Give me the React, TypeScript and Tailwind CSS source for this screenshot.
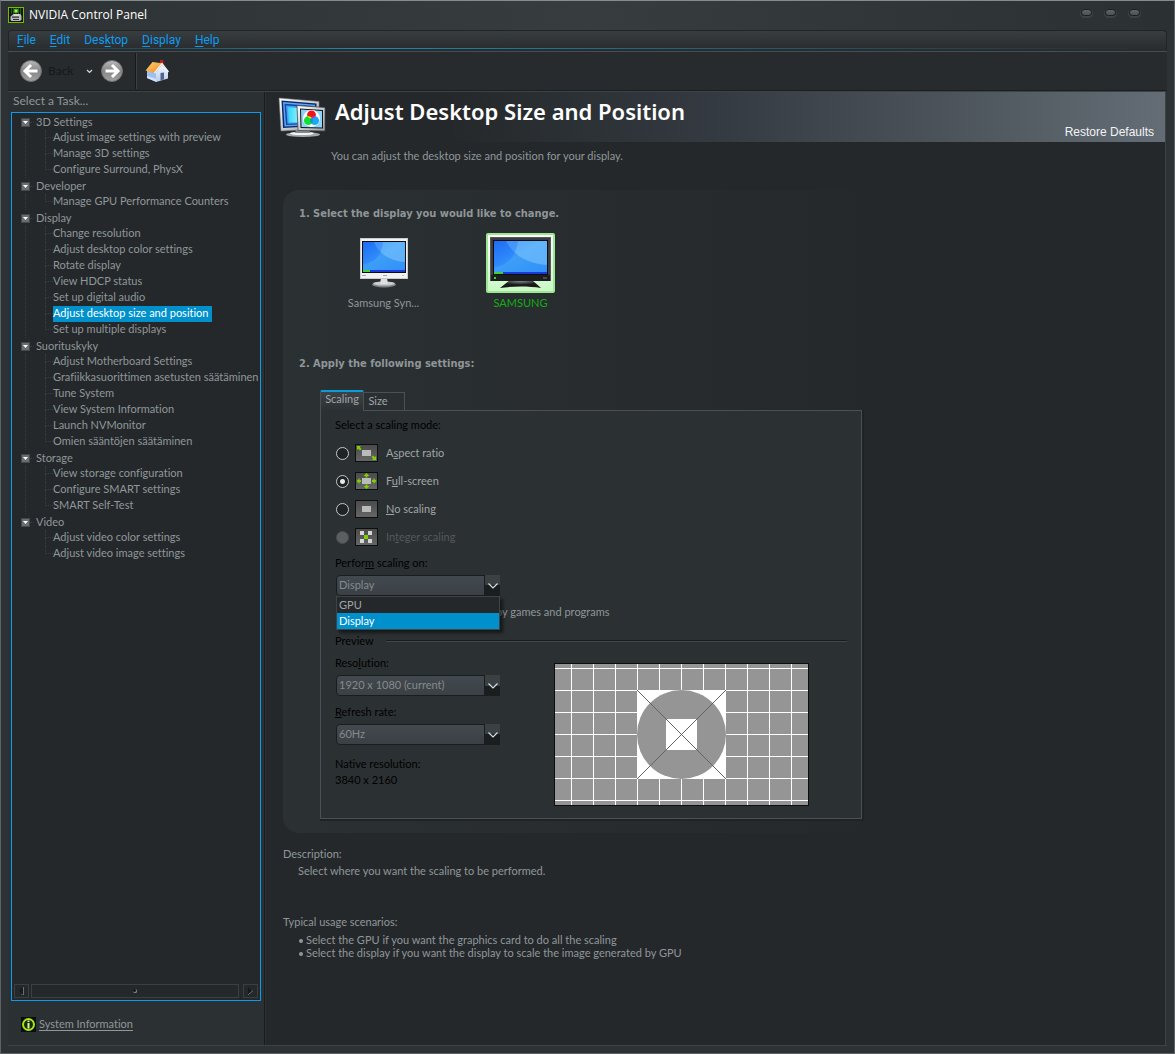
import { useState, type ReactNode } from "react";

type Group = { name: string; items: string[] };

const GROUPS: Group[] = [
  {
    name: "3D Settings",
    items: ["Adjust image settings with preview", "Manage 3D settings", "Configure Surround, PhysX"],
  },
  { name: "Developer", items: ["Manage GPU Performance Counters"] },
  {
    name: "Display",
    items: [
      "Change resolution",
      "Adjust desktop color settings",
      "Rotate display",
      "View HDCP status",
      "Set up digital audio",
      "Adjust desktop size and position",
      "Set up multiple displays",
    ],
  },
  {
    name: "Suorituskyky",
    items: [
      "Adjust Motherboard Settings",
      "Grafiikkasuorittimen asetusten säätäminen",
      "Tune System",
      "View System Information",
      "Launch NVMonitor",
      "Omien sääntöjen säätäminen",
    ],
  },
  {
    name: "Storage",
    items: ["View storage configuration", "Configure SMART settings", "SMART Self-Test"],
  },
  { name: "Video", items: ["Adjust video color settings", "Adjust video image settings"] },
];

function AppIcon() {
  return (
    <svg width="16" height="16" viewBox="0 0 16 16" aria-hidden="true">
      <rect x="0.5" y="0.5" width="15" height="15" fill="#111411" stroke="#76b900" />
      <path d="M3.500 1v6M5.500 1v6M10.500 1v6M12.500 1v6" stroke="#2d5a12" />
      <circle cx="8" cy="4" r="2.400" fill="#3fb010" />
      <circle cx="8" cy="4" r="1.200" fill="#8dff4a" />
      <path d="M2.500 9.500l3-2.500h7l1 2v4l-2 1h-8l-1-1z" fill="#b9bcbb" />
      <path d="M4 9.500h7v1.200H4zM5 12h6v1H5z" fill="#2a2e2d" />
      <path d="M6 8h5" stroke="#f2f4f3" />
    </svg>
  );
}

function ArrowDisc({ forward = false }: { forward?: boolean }) {
  const id = forward ? "discF" : "discB";
  return (
    <svg width="22" height="22" viewBox="0 0 22 22" aria-hidden="true">
      <defs>
        <linearGradient id={id} x1="0" y1="0" x2="0" y2="1">
          <stop offset="0" stopColor="#b9b9b9" />
          <stop offset="0.5" stopColor="#868686" />
          <stop offset="1" stopColor="#a2a2a2" />
        </linearGradient>
      </defs>
      <circle cx="11" cy="11" r="10.5" fill={`url(#${id})`} stroke="#6d6f70" />
      <path
        d={forward ? "M4.500 11h11M11 5l6 6-6 6" : "M17.500 11h-11M11 5l-6 6 6 6"}
        fill="none"
        stroke="#fff"
        strokeWidth="3"
      />
    </svg>
  );
}

function HomeIcon() {
  return (
    <svg width="24" height="24" viewBox="0 0 24 24" aria-hidden="true">
      <defs>
        <linearGradient id="roof" x1="0" y1="0" x2="1" y2="1">
          <stop offset="0" stopColor="#ffcf73" />
          <stop offset="1" stopColor="#f08a1d" />
        </linearGradient>
        <linearGradient id="wall" x1="0" y1="0" x2="0" y2="1">
          <stop offset="0" stopColor="#f6f9ff" />
          <stop offset="1" stopColor="#b7cdf0" />
        </linearGradient>
      </defs>
      <rect x="15" y="1" width="3.500" height="7" fill="#b3231c" />
      <path d="M2 11v8l9.500 4V13L6 8z" fill="#9fc0ec" />
      <path d="M2 17v2l9.500 4v-3z" fill="#d3e4fa" />
      <path d="M11 13l6-7.500 6 6.500v7.500L11 23z" fill="url(#wall)" />
      <path d="M15.500 14l3.500-.5v7l-3.500.8z" fill="#55648e" />
      <path d="M0.500 11.500L7.500 3l9.500 1.300-7.500 9.700z" fill="url(#roof)" />
      <path d="M9.500 14L17 4.500l6.500 8.500" fill="none" stroke="#f4f7fc" strokeWidth="1.300" />
    </svg>
  );
}

function PageIcon() {
  return (
    <svg width="50" height="42" viewBox="0 0 50 42" aria-hidden="true">
      <defs>
        <linearGradient id="pScr" x1="0" y1="0" x2="1" y2="0">
          <stop offset="0" stopColor="#35d2fb" />
          <stop offset="0.500" stopColor="#8ff6ff" />
          <stop offset="1" stopColor="#1fb6f2" />
        </linearGradient>
        <linearGradient id="pFrame" x1="0" y1="0" x2="1" y2="1">
          <stop offset="0" stopColor="#ffffff" />
          <stop offset="1" stopColor="#9b9fa2" />
        </linearGradient>
      </defs>
      <ellipse cx="25" cy="37.500" rx="17" ry="2.600" fill="#a5a8aa" />
      <ellipse cx="24" cy="36.500" rx="12" ry="1.600" fill="#f3f4f5" />
      <path d="M19 30h12l1 6H17z" fill="#85898b" />
      <path d="M1 1l40 3.500v27.500L3 34z" fill="url(#pFrame)" stroke="#75797b" strokeWidth="0.600" />
      <path d="M3.500 3.500l35 3v22.500L5 31z" fill="#0a2a6b" />
      <path d="M5 5l32 2.700v20.300L6.500 29.500z" fill="#5fa5ee" />
      <path d="M6.500 6.700l29 2.400v18L8 28z" fill="#0d4aa8" />
      <path d="M8 8.400l26 2v15.600L9.500 26.700z" fill="#4aa0ef" />
      <path d="M9.800 10.200l23 1.700V25l-22 .6z" fill="url(#pScr)" />
      <path d="M19 8.500l28 2v23.500l-27-.5z" fill="url(#pFrame)" stroke="#44484a" strokeWidth="0.800" />
      <path d="M22 11.500l23 1.500v18.500l-22.500-.5z" fill="#10141a" />
      <path d="M23 12.500l21 1.400v16.600l-20.500-.5z" fill="#8ed2f5" />
      <circle cx="33.500" cy="21.500" r="8.500" fill="#fff" />
      <circle cx="33.500" cy="17.800" r="4.400" fill="#f01414" />
      <circle cx="30.300" cy="23.600" r="4.400" fill="#12e032" />
      <circle cx="36.700" cy="23.600" r="4.400" fill="#1ca8f5" />
      <path d="M33.500 20.600a4.400 4.400 0 0 1 0 6a4.400 4.400 0 0 1 0-6z" fill="#0aa0a8" />
      <path d="M29.400 19.300a4.400 4.400 0 0 1 4.600 2a4.400 4.400 0 0 1-4.600-2z" fill="#ffe600" />
      <path d="M37.600 19.300a4.400 4.400 0 0 0-4.600 2a4.400 4.400 0 0 0 4.600-2z" fill="#e815c8" />
    </svg>
  );
}

function ScreenFill({ id }: { id: string }) {
  return (
    <defs>
      <linearGradient id={id} x1="0" y1="0" x2="1" y2="1">
        <stop offset="0" stopColor="#1a63ee" />
        <stop offset="0.450" stopColor="#3d9ef8" />
        <stop offset="1" stopColor="#2f8ff8" />
      </linearGradient>
    </defs>
  );
}

function WhiteMonitor() {
  return (
    <svg width="50" height="52" viewBox="0 0 50 52" aria-hidden="true">
      <ScreenFill id="scrW" />
      <ellipse cx="25" cy="47.500" rx="12" ry="3" fill="#808384" />
      <ellipse cx="25" cy="46.500" rx="11" ry="2" fill="#c9cbcc" />
      <path d="M22 41h6l1 6h-8z" fill="#dddfe0" />
      <rect x="1.500" y="1.500" width="47" height="40" fill="#f2f2f2" stroke="#c9cccd" />
      <rect x="3" y="4" width="44" height="32" fill="#0b0d12" />
      <rect x="4" y="5" width="42" height="30" fill="url(#scrW)" />
      <path d="M15 5c6 14 18 19 31 20V5z" fill="#7cc4fc" opacity="0.600" />
      <path d="M4 27c12-1 19-10 20-22H4z" fill="#2277ff" opacity="0.400" />
      <rect x="4" y="33" width="42" height="2" fill="#1b39d8" />
      <rect x="4" y="33" width="7" height="2" fill="#3fd12f" />
      <path d="M3 38.500h4M24 38.500h4" stroke="#a5a8aa" />
      <path d="M43 38.500h2" stroke="#b7d24a" />
    </svg>
  );
}

function BlackMonitor() {
  return (
    <svg width="61" height="52" viewBox="0 0 61 52" aria-hidden="true">
      <ScreenFill id="scrB" />
      <defs>
        <radialGradient id="stand" cx="0.5" cy="0.1" r="0.5">
          <stop offset="0" stopColor="#8a8d8e" />
          <stop offset="1" stopColor="#17191a" />
        </radialGradient>
      </defs>
      <path d="M20 43h22l9 8c-12-2-28-2-41 0z" fill="url(#stand)" />
      <rect x="0.500" y="0.500" width="60" height="43" fill="#3a3c3d" stroke="#57595a" />
      <rect x="1" y="38" width="59" height="6" fill="#1b1d1e" />
      <rect x="3" y="3" width="55" height="35" fill="#0b0d12" />
      <rect x="4" y="4" width="53" height="33" fill="url(#scrB)" />
      <path d="M16 4c8 16 24 23 41 24V4z" fill="#7cc4fc" opacity="0.600" />
      <path d="M4 30c14-1 22-12 24-26H4z" fill="#2277ff" opacity="0.400" />
      <rect x="4" y="35" width="53" height="2" fill="#1b39d8" />
      <rect x="4" y="35" width="9" height="2" fill="#3fd12f" />
      <rect x="4" y="40" width="2" height="2" fill="#3fd12f" />
      <path d="M53 41h4" stroke="#777" />
    </svg>
  );
}

function ModeIcon({ mode }: { mode: string }) {
  return (
    <svg width="23" height="18" viewBox="0 0 23 18" aria-hidden="true">
      <defs>
        <linearGradient id="modeBg" x1="0" y1="0" x2="0" y2="1">
          <stop offset="0" stopColor="#4a4a4a" />
          <stop offset="1" stopColor="#666" />
        </linearGradient>
      </defs>
      <rect x="0.500" y="0.500" width="22" height="17" fill="url(#modeBg)" stroke="#0d0e0e" />
      {mode !== "integer" && <rect x="7" y="6" width="9" height="6" fill="#b9bbbb" />}
      {mode === "aspect" && (
        <g fill="#7fd000">
          <path d="M2 2h4L4.800 3.200 6.500 5 5 6.500 3.200 4.800 2 6z" />
          <path d="M21 16h-4l1.200-1.200L16.500 13l1.500-1.500 1.800 1.700L21 12z" />
        </g>
      )}
      {mode === "full" && (
        <g fill="#7fd000">
          <path d="M11.500 1l3 3h-2v1.500h-2V4h-2z" />
          <path d="M11.500 17l3-3h-2v-1.500h-2V14h-2z" />
          <path d="M1.500 9l3-3v2h1.500v2H4.500v2z" />
          <path d="M21.500 9l-3-3v2H17v2h1.500v2z" />
        </g>
      )}
      {mode === "integer" && (
        <g fill="#d6d6d6">
          <rect x="5" y="3" width="4" height="4" />
          <rect x="13" y="3" width="4" height="4" />
          <rect x="5" y="11" width="4" height="4" />
          <rect x="13" y="11" width="4" height="4" />
          <rect x="9" y="7" width="4" height="4" fill="#7fd000" />
        </g>
      )}
    </svg>
  );
}

function PreviewPattern() {
  const cols = Array.from({ length: 11 }, (_, i) => 17 + i * 22);
  const rows = Array.from({ length: 7 }, (_, i) => 5 + i * 22);
  return (
    <svg width="255" height="143" viewBox="0 0 255 143" role="img" aria-label="Scaling preview" shapeRendering="crispEdges">
      <rect width="255" height="143" fill="#0c0d0d" />
      <rect x="1" y="1" width="253" height="141" fill="#959595" />
      {cols.map((x) => (
        <rect key={x} x={x} y="1" width="1" height="141" fill="#fff" />
      ))}
      {rows.map((y) => (
        <rect key={y} x="1" y={y} width="253" height="1" fill="#fff" />
      ))}
      <rect x="83" y="27" width="89" height="89" fill="#fff" />
      <circle cx="127.500" cy="71.500" r="44.500" fill="#959595" shapeRendering="auto" />
      <rect x="112" y="56" width="31" height="31" fill="#fff" />
      <path d="M83 27l89 89M172 27l-89 89" stroke="#636363" strokeWidth="1" shapeRendering="auto" />
    </svg>
  );
}

function MenuBar() {
  const menus: [string, string, string][] = [
    ["", "F", "ile"],
    ["", "E", "dit"],
    ["Des", "k", "top"],
    ["", "D", "isplay"],
    ["", "H", "elp"],
  ];
  return (
    <nav className="mx-[7px] flex h-[21px] flex-col rounded-t border border-b-0 border-[#212526] bg-gradient-to-b from-[#383d40] to-[#272b2d] pl-px">
      <div className="flex h-[17px] items-end">
        {menus.map(([a, b, c]) => (
          <button key={b} className="px-[7px] font-['Roboto',sans-serif] text-[12px] leading-4 text-[#0c9df2]">
            {a}
            <u className="underline-offset-2">{b}</u>
            {c}
          </button>
        ))}
      </div>
      <div className="mx-2 h-px bg-gradient-to-r from-transparent via-[#1f86ac] via-30% to-transparent" />
    </nav>
  );
}

function Toolbar() {
  return (
    <div className="mx-[7px] flex h-10 items-center border-t border-[#474d50] border-b border-b-[#1c1f20] bg-[#272b2d] pl-3">
      <button className="flex items-center gap-[6px]">
        <ArrowDisc />
        <span className="text-[12px] text-[#15181a]">Back</span>
      </button>
      <button aria-label="Recent pages" className="ml-2 flex h-5 w-4 items-center justify-center">
        <svg width="7" height="5" viewBox="0 0 7 5">
          <path d="M1 1l2.500 2.500L6 1" fill="none" stroke="#d5d9db" strokeWidth="1.200" />
        </svg>
      </button>
      <button aria-label="Forward" className="ml-1">
        <ArrowDisc forward />
      </button>
      <span className="ml-3 h-9 w-[2px] border-l border-[#17191a] bg-[#3c4143]" />
      <button aria-label="Home" className="ml-2">
        <HomeIcon />
      </button>
    </div>
  );
}

function TaskTree() {
  return (
    <ul className="pt-px pl-[9px]">
      {GROUPS.map((g, gi) => (
        <li key={g.name}>
          <div className="flex h-4 items-center">
            <button
              aria-label={`Collapse ${g.name}`}
              className="flex h-[9px] w-[9px] items-center justify-center border border-[#44484a] bg-[#6a6e70]"
            >
              <svg width="5" height="3" viewBox="0 0 5 3">
                <path d="M0 0h5L2.500 3z" fill="#fff" />
              </svg>
            </button>
            <span className="h-px w-1 border-t border-dotted border-[#373c3e]" />
            <span className="pl-[2px] leading-4">{g.name}</span>
          </div>
          <ul className={gi === GROUPS.length - 1 ? "ml-1 pl-px" : "ml-1 border-l border-dotted border-[#373c3e]"}>
            {g.items.map((it, i) => {
              const active = it === "Adjust desktop size and position";
              const last = i === g.items.length - 1;
              return (
                <li key={it} className="flex h-4 pl-[19px]">
                  <span className="flex w-2 flex-col">
                    <span className="h-2 border-b border-l border-dotted border-[#373c3e]" />
                    {!last && <span className="h-2 border-l border-dotted border-[#373c3e]" />}
                  </span>
                  <a
                    href="#"
                    className={
                      active
                        ? "bg-[#0090cb] pr-1 leading-[13px] whitespace-nowrap text-white"
                        : "leading-[13px] whitespace-nowrap"
                    }
                  >
                    {it}
                  </a>
                </li>
              );
            })}
          </ul>
        </li>
      ))}
    </ul>
  );
}

function Sidebar() {
  return (
    <aside className="flex w-[257px] shrink-0 flex-col border-r border-[#191c1d] bg-[#2b3032] pl-[3px]">
      <h2 className="pb-[2px] pl-[2px] text-[12px] leading-[18px]">Select a Task...</h2>
      <div className="mr-[3px] flex flex-1 flex-col border border-[#0a9cf5] bg-[#24282a]">
        <TaskTree />
        <div className="mt-auto mb-[2px] flex h-[14px] gap-[2px] px-[2px]">
          <button aria-label="Scroll left" className="flex w-[15px] items-center justify-center border border-[#3a3f41]">
            <svg width="7" height="8" viewBox="0 0 7 8">
              <path d="M5 0v8L1 4z" fill="#171a1b" />
              <path d="M5.500 0v8H3" fill="none" stroke="#6a6f71" />
            </svg>
          </button>
          <div className="flex flex-1 items-center justify-center border border-[#3a3f41]">
            <span className="h-1 w-1 rounded-full border-r border-b border-[#8a8f91] bg-[#111]" />
          </div>
          <button aria-label="Scroll right" className="ml-[2px] flex w-[15px] items-center justify-center border border-[#3a3f41]">
            <svg width="7" height="8" viewBox="0 0 7 8">
              <path d="M1 0v8l4-4z" fill="#171a1b" />
              <path d="M1 8l5-4.500" fill="none" stroke="#6a6f71" />
            </svg>
          </button>
        </div>
      </div>
      <div className="flex h-11 items-center gap-[3px] pt-[3px] pl-[10px]">
        <svg width="15" height="15" viewBox="0 0 15 15" aria-hidden="true">
          <rect width="15" height="15" fill="#0b0d08" />
          <circle cx="7.500" cy="7.500" r="5.500" fill="#1a2a05" stroke="#a5e51a" strokeWidth="2" />
          <rect x="6.500" y="3.500" width="2" height="1.600" fill="#d9f79a" />
          <rect x="6.500" y="6" width="2" height="5.500" fill="#d9f79a" />
        </svg>
        <a href="#" className="text-[11px] underline underline-offset-2">
          System Information
        </a>
      </div>
    </aside>
  );
}

function SelectBox({ id, value, children }: { id: string; value: string; children?: ReactNode }) {
  return (
    <div className="relative mt-1 ml-px h-[21px] w-[164px]">
      <select
        id={id}
        defaultValue={value}
        className="h-full w-full appearance-none rounded-sm border border-[#1a1d1e] bg-[#40464b] bg-gradient-to-b from-[#434a4f] to-[#3a4045] pl-[2px] text-[11px] text-[#868a8c]"
      >
        {id === "perform" && <option>GPU</option>}
        <option>{value}</option>
      </select>
      <span className="pointer-events-none absolute inset-y-0 right-0 flex w-4 items-center justify-center border-l border-[#1a1d1e] bg-gradient-to-b from-[#3b4042] from-50% to-[#1b1e1f] to-50%">
        <svg width="10" height="6" viewBox="0 0 10 6">
          <path d="M0.500 0.500L5 5l4.500-4.500" fill="none" stroke="#cfe3ea" strokeWidth="1.200" />
        </svg>
      </span>
      {children}
    </div>
  );
}

function ScalingPanel() {
  const [mode, setMode] = useState("full");
  const modes: [string, string, string, string][] = [
    ["aspect", "A", "s", "pect ratio"],
    ["full", "F", "u", "ll-screen"],
    ["none", "", "N", "o scaling"],
    ["integer", "In", "t", "eger scaling"],
  ];
  return (
    <div className="-mt-px w-[542px] border border-[#4b5053] bg-[#2b3032] px-[14px] pt-[6px] pb-3 text-black shadow-[1px_1px_0_1px_#1f2324]">
      <fieldset>
        <legend className="mb-[6px] leading-4">Select a scaling mode:</legend>
        {modes.map(([key, a, b, c]) => {
          const off = key === "integer";
          return (
            <label key={key} className={off ? "flex h-7 items-center text-[#54595b]" : "flex h-7 items-center text-[#a0a5a8]"}>
              <input
                type="radio"
                name="mode"
                checked={mode === key}
                disabled={off}
                onChange={() => setMode(key)}
                className="ml-px h-[13px] w-[13px] appearance-none rounded-full border border-[#c4c8ca] bg-[#1f2324] checked:bg-[radial-gradient(circle,#e8e8e8_0_2px,#1f2324_3px)] disabled:border-[#4a4e50] disabled:bg-[#5b5f61]"
              />
              <span className="mr-2 ml-[6px]">
                <ModeIcon mode={key} />
              </span>
              <span>
                {a}
                <u>{b}</u>
                {c}
              </span>
            </label>
          );
        })}
      </fieldset>
      <label htmlFor="perform" className="mt-1 block leading-4">
        Perfor<u>m</u> scaling on:
      </label>
      <SelectBox id="perform" value="Display">
        <ul
          role="listbox"
          aria-label="Perform scaling on"
          className="absolute top-full right-0 left-0 z-10 border border-[#3f4446] bg-[#24282a] text-[11px] leading-4 text-[#a0a5a8] shadow-[3px_3px_3px_#00000080]"
        >
          <li role="option" aria-selected="false" className="pl-[2px]">
            GPU
          </li>
          <li role="option" aria-selected="true" className="bg-[#0090cb] pl-[2px] text-white">
            Display
          </li>
        </ul>
      </SelectBox>
      <p className="mt-2 pl-[161px] leading-4 text-[#90979a]">by games and programs</p>
      <div className="mt-[13px] flex items-center gap-3">
        <h4 className="leading-4">Preview</h4>
        <span className="h-[2px] flex-1 border-t border-[#1a1d1e] bg-[#43484b]" />
      </div>
      <div className="mt-[6px] flex">
        <div className="w-[219px]">
          <label htmlFor="res" className="block leading-4">
            Reso<u>l</u>ution:
          </label>
          <SelectBox id="res" value="1920 x 1080 (current)" />
          <label htmlFor="rate" className="mt-2 block leading-4">
            <u>R</u>efresh rate:
          </label>
          <SelectBox id="rate" value="60Hz" />
          <p className="mt-[11px] leading-4">Native resolution:</p>
          <p className="leading-4">3840 x 2160</p>
        </div>
        <div className="pt-2">
          <PreviewPattern />
        </div>
      </div>
    </div>
  );
}

function StepTitle({ children }: { children: ReactNode }) {
  return (
    <h3 className="font-['DejaVu_Sans_Condensed','DejaVu_Sans',sans-serif] text-[11px] leading-4 font-bold text-[#8f9699]">
      {children}
    </h3>
  );
}

function Main() {
  return (
    <main className="flex-1 border-l border-[#2b2f31] bg-[#24282a]">
      <header className="flex h-[50px] justify-between bg-gradient-to-r from-[#24282a] from-20% via-[#343a41] via-50% to-[#646d75] pr-[11px] pl-3">
        <div className="flex">
          <span className="pt-[5px]">
            <PageIcon />
          </span>
          <h1 className="ml-[7px] font-['Noto_Sans',sans-serif] text-[22px] leading-[38px] font-semibold text-white">
            Adjust Desktop Size and Position
          </h1>
        </div>
        <button className="self-end font-['Liberation_Sans',sans-serif] text-[12px] leading-5 text-[#f2f4f5]">
          Restore Defaults
        </button>
      </header>
      <p className="mt-[6px] ml-[65px] leading-4">You can adjust the desktop size and position for your display.</p>

      <section className="mt-[26px] ml-[17px] rounded-l-2xl bg-gradient-to-r from-[#2b3032] to-[#24282a] to-70% pt-4 pb-[14px] pl-4">
        <StepTitle>1. Select the display you would like to change.</StepTitle>
        <div className="mt-[11px] mb-[45px] ml-4 flex">
          <button className="flex w-[137px] flex-col items-center">
            <span className="flex h-[60px] items-center">
              <WhiteMonitor />
            </span>
            <span className="mt-[2px] leading-4">Samsung Syn...</span>
          </button>
          <button className="flex w-[137px] flex-col items-center">
            <span className="flex h-[60px] w-[69px] items-center justify-center rounded-xs border-2 border-[#9be890] bg-gradient-to-b from-white to-[#c9f9c4]">
              <BlackMonitor />
            </span>
            <span className="mt-[2px] leading-4 text-[#12ad12]">SAMSUNG</span>
          </button>
        </div>
        <StepTitle>2. Apply the following settings:</StepTitle>
        <div className="mt-[18px] ml-[21px]">
          <div role="tablist" className="flex items-end">
            <button
              role="tab"
              aria-selected="true"
              className="relative h-[21px] w-11 rounded-t-xs border border-b-0 border-t-2 border-[#4b5053] border-t-[#0a9cd8] bg-gradient-to-b from-[#3c4245] to-[#2b3032] pb-[6px] leading-[14px] text-[#a0a5a8]"
            >
              Scaling
            </button>
            <button
              role="tab"
              aria-selected="false"
              className="h-[19px] w-[41px] border border-l-0 border-[#4b5053] pr-3 pb-px leading-4 text-[#a0a5a8]"
            >
              Size
            </button>
          </div>
          <ScalingPanel />
        </div>
      </section>

      <section className="mt-[13px] ml-[17px]">
        <h3 className="leading-4">Description:</h3>
        <p className="mt-px ml-[15px] leading-4">Select where you want the scaling to be performed.</p>
        <h3 className="mt-[35px] leading-4">Typical usage scenarios:</h3>
        <ul className="mt-[3px] ml-4 leading-[13px]">
          {[
            "Select the GPU if you want the graphics card to do all the scaling",
            "Select the display if you want the display to scale the image generated by GPU",
          ].map((t) => (
            <li key={t} className="flex items-center gap-[3px]">
              <span className="mt-[2px] h-1 w-1 rounded-full bg-[#90979a]" />
              {t}
            </li>
          ))}
        </ul>
      </section>
    </main>
  );
}

export default function App() {
  return (
    <div className="flex min-h-screen flex-col border border-[#5c6265] border-t-[#858c90] bg-[#2d3234] font-['Lato',sans-serif] text-[11px] text-[#90979a] [font-variant-ligatures:none]">
      <header className="flex h-[29px] justify-between bg-gradient-to-r from-[#2d3234] via-[#373c3e] to-[#2b3032] pb-px pl-[7px]">
        <div className="flex items-center gap-[5px]">
          <AppIcon />
          <h1 className="font-['Open_Sans',sans-serif] text-[12px] text-white">NVIDIA Control Panel</h1>
        </div>
        <div className="mt-2 mr-[34px] flex gap-[13px]">
          {["Minimize", "Maximize", "Close"].map((n) => (
            <button
              key={n}
              aria-label={n}
              className="h-[7px] w-[11px] rounded-sm border border-[#1d2021] bg-gradient-to-b from-[#5e6568] to-[#4c5255] shadow-[0_1px_0_1px_#3d4244]"
            />
          ))}
        </div>
      </header>
      <MenuBar />
      <Toolbar />
      <div className="mr-2 ml-[7px] flex flex-1 border-t border-r border-[#3d4244]">
        <Sidebar />
        <Main />
      </div>
      <footer className="mx-[7px] h-2 border-t border-[#3d4244]" />
    </div>
  );
}
